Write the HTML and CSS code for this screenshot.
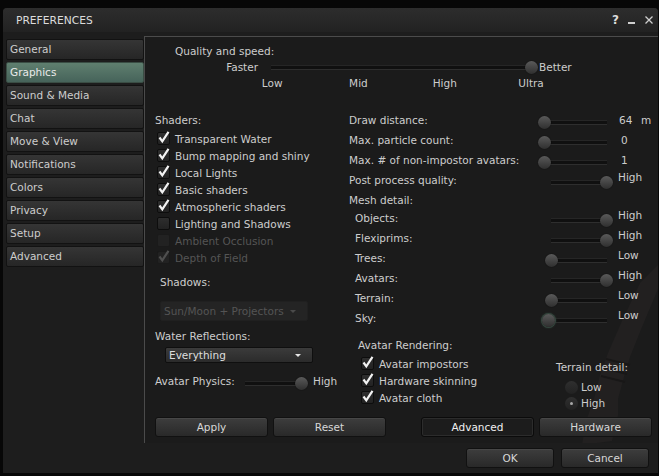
FILE: index.html
```html
<!DOCTYPE html>
<html lang="en">
<head>
    <meta charset="UTF-8">
    <title>Preferences</title>
    <link rel="stylesheet" href="styles.css">
</head>
<body>
<div class="floater">
    <div class="titlebar">
        <span class="title">PREFERENCES</span>
        <div class="controls">
            <span class="help">?</span>
            <span class="minimize"></span>
            <svg class="close" width="8" height="8" viewBox="0 0 8 8"><path d="M0.5 0.5 L7.5 7.5 M7.5 0.5 L0.5 7.5" stroke="#cfcfcf" stroke-width="1.3"/></svg>
        </div>
    </div>

    <div class="main">
        <ul class="tabs">
            <li>General</li>
            <li class="active">Graphics</li>
            <li>Sound &amp; Media</li>
            <li>Chat</li>
            <li>Move &amp; View</li>
            <li>Notifications</li>
            <li>Colors</li>
            <li>Privacy</li>
            <li>Setup</li>
            <li>Advanced</li>
        </ul>

        <div class="panel">
            <!-- faint avatar arm in the background -->
            <svg class="watermark" width="90" height="180" viewBox="0 0 90 180">
                <path d="M90 0 L90 24 L74 62 L62 92 L56 112 L50 134 L50 150 L44 176 L14 180 L18 156 L26 134 L32 110 L40 88 L54 56 L72 18 Z" fill="#222020"/>
                <path d="M38 94 L62 100 M35 103 L59 109 M33 111 L57 117" stroke="#181717" stroke-width="2"/>
            </svg>

            <div class="quality">
                <div class="q-title">Quality and speed:</div>
                <div class="q-row">
                    <span class="q-faster">Faster</span>
                    <div class="slider q-slider"><i class="track"></i><i class="knob max"></i></div>
                    <span class="q-better">Better</span>
                </div>
                <div class="q-ticks">
                    <span>Low</span><span>Mid</span><span>High</span><span>Ultra</span>
                </div>
            </div>

            <div class="columns">
                <div class="col-left">
                    <div class="hdr">Shaders:</div>
                    <div class="cb"><span class="box"><svg viewBox="0 0 13 13"><path d="M2.5 6.5 L5.3 10.3 L11.5 0.8"/></svg></span>Transparent Water</div>
                    <div class="cb"><span class="box"><svg viewBox="0 0 13 13"><path d="M2.5 6.5 L5.3 10.3 L11.5 0.8"/></svg></span>Bump mapping and shiny</div>
                    <div class="cb"><span class="box"><svg viewBox="0 0 13 13"><path d="M2.5 6.5 L5.3 10.3 L11.5 0.8"/></svg></span>Local Lights</div>
                    <div class="cb"><span class="box"><svg viewBox="0 0 13 13"><path d="M2.5 6.5 L5.3 10.3 L11.5 0.8"/></svg></span>Basic shaders</div>
                    <div class="cb"><span class="box"><svg viewBox="0 0 13 13"><path d="M2.5 6.5 L5.3 10.3 L11.5 0.8"/></svg></span>Atmospheric shaders</div>
                    <div class="cb"><span class="box"></span>Lighting and Shadows</div>
                    <div class="cb disabled"><span class="box"></span>Ambient Occlusion</div>
                    <div class="cb disabled"><span class="box"><svg viewBox="0 0 13 13"><path d="M2.5 6.5 L5.3 10.3 L11.5 0.8"/></svg></span>Depth of Field</div>

                    <div class="shadows-lbl">Shadows:</div>
                    <div class="combo combo-off">Sun/Moon + Projectors<i class="arrow"></i></div>

                    <div class="water-lbl">Water Reflections:</div>
                    <div class="combo combo-on">Everything<i class="arrow"></i></div>

                    <div class="physics">
                        <span class="physics-lbl">Avatar Physics:</span>
                        <div class="slider s-phys"><i class="track"></i><i class="knob max"></i></div>
                        <span class="physics-val">High</span>
                    </div>
                </div>

                <div class="col-right">
                    <div class="row"><span class="lbl">Draw distance:</span><div class="slider s-a"><i class="track"></i><i class="knob"></i></div><span class="val">64</span><span>m</span></div>
                    <div class="row"><span class="lbl">Max. particle count:</span><div class="slider s-a"><i class="track"></i><i class="knob"></i></div><span class="val num">0</span></div>
                    <div class="row"><span class="lbl">Max. # of non-impostor avatars:</span><div class="slider s-a"><i class="track"></i><i class="knob"></i></div><span class="val num">1</span></div>
                    <div class="row"><span class="lbl">Post process quality:</span><div class="slider s-b"><i class="track"></i><i class="knob max"></i></div><span class="val top">High</span></div>
                    <div class="mesh-hdr">Mesh detail:</div>
                    <div class="row sub"><span class="lbl">Objects:</span><div class="slider s-b"><i class="track"></i><i class="knob max"></i></div><span class="val top">High</span></div>
                    <div class="row sub"><span class="lbl">Flexiprims:</span><div class="slider s-b"><i class="track"></i><i class="knob max"></i></div><span class="val top">High</span></div>
                    <div class="row sub"><span class="lbl">Trees:</span><div class="slider s-b"><i class="track"></i><i class="knob"></i></div><span class="val top">Low</span></div>
                    <div class="row sub"><span class="lbl">Avatars:</span><div class="slider s-b"><i class="track"></i><i class="knob max"></i></div><span class="val top">High</span></div>
                    <div class="row sub"><span class="lbl">Terrain:</span><div class="slider s-b"><i class="track"></i><i class="knob"></i></div><span class="val top">Low</span></div>
                    <div class="row sub"><span class="lbl">Sky:</span><div class="slider s-b"><i class="track"></i><i class="knob focus"></i></div><span class="val top">Low</span></div>

                    <div class="rend">
                        <div class="rend-left">
                            <div class="rend-hdr">Avatar Rendering:</div>
                            <div class="cb"><span class="box"><svg viewBox="0 0 13 13"><path d="M2.5 6.5 L5.3 10.3 L11.5 0.8"/></svg></span>Avatar impostors</div>
                            <div class="cb"><span class="box"><svg viewBox="0 0 13 13"><path d="M2.5 6.5 L5.3 10.3 L11.5 0.8"/></svg></span>Hardware skinning</div>
                            <div class="cb"><span class="box"><svg viewBox="0 0 13 13"><path d="M2.5 6.5 L5.3 10.3 L11.5 0.8"/></svg></span>Avatar cloth</div>
                        </div>
                        <div class="terrain">
                            <div>Terrain detail:</div>
                            <div class="radios">
                                <div class="rb"><span class="dot"></span>Low</div>
                                <div class="rb on"><span class="dot"></span>High</div>
                            </div>
                        </div>
                    </div>
                </div>
            </div>

            <div class="panel-buttons">
                <button class="btn">Apply</button>
                <button class="btn">Reset</button>
                <button class="btn pressed gap">Advanced</button>
                <button class="btn">Hardware</button>
            </div>
        </div>
    </div>

    <div class="footer">
        <button class="btn small">OK</button>
        <button class="btn small">Cancel</button>
    </div>
</div>
</body>
</html>
```

FILE: styles.css
```css
* {
    box-sizing: border-box;
}

body {
    margin: 0;
    background: #070707;
    font-family: "DejaVu Sans", sans-serif;
    font-size: 10.5px;
    color: #cdcdcd;
}

.floater {
    margin: 8px 0 0 3px;
    width: 655px;
    height: 465px;
    background: #1d1d1d;
    border-radius: 4px 4px 0 0;
    display: flex;
    flex-direction: column;
    overflow: hidden;
}

/* title bar */
.titlebar {
    height: 24px;
    display: flex;
    align-items: center;
    padding: 0 5px 0 13px;
    background: linear-gradient(#2d2d2d, #222);
    color: #dcdcdc;
    font-size: 10.7px;
}
.title {
    flex: 1;
}
.controls {
    display: flex;
    align-items: center;
}
.help {
    font-weight: bold;
    font-size: 12px;
    margin-right: 9px;
}
.minimize {
    width: 7px;
    height: 2px;
    background: #cfcfcf;
    margin: 6px 10px 0 0;
}

/* tabs + panel */
.main {
    margin-top: 4px;
    height: 407px;
    display: flex;
}
.tabs {
    list-style: none;
    margin: 0;
    padding: 3px 0 0 3px;
    width: 141px;
    display: flex;
    flex-direction: column;
    gap: 2px;
}
.tabs li {
    height: 21px;
    line-height: 19px;
    padding-left: 3px;
    border: 1px solid #121212;
    border-radius: 2px;
    background: linear-gradient(#353535, #262626);
}
.tabs li.active {
    background: linear-gradient(#5f7f6f, #46635a);
    border-color: #3a4d44;
    color: #eaeaea;
}

.panel {
    flex: 1;
    position: relative;
    overflow: hidden;
    border-top: 1px solid #4b4b4b;
    border-left: 1px solid #4b4b4b;
    background: #1b1b1b;
    display: flex;
    flex-direction: column;
}
.watermark {
    position: absolute;
    right: 0;
    top: 228px;
}

/* quality slider */
.quality {
    position: relative;
}
.q-title {
    margin: 7px 0 0 30px;
    line-height: 14px;
}
.q-row {
    margin-top: 2px;
    height: 14px;
    display: flex;
    align-items: center;
}
.q-faster {
    width: 113px;
    text-align: right;
}
.q-slider {
    margin-left: 7px;
    width: 273px;
}
.q-slider .track {
    top: 5px;
    height: 3px;
    background: #0e0e0e;
    border-top: 1px solid #2c2c2c;
    border-bottom: 1px solid #333;
}
.q-better {
    margin-left: 1px;
}
.q-ticks {
    margin: 2px 0 0 84px;
    display: flex;
    line-height: 14px;
}
.q-ticks span {
    width: 86.3px;
    text-align: center;
}

/* sliders */
.slider {
    position: relative;
    height: 13px;
}
.slider .track {
    position: absolute;
    left: 6px;
    right: 6px;
    top: 4px;
    height: 5px;
    background: #101010;
    border-top: 1px solid #262626;
    border-bottom: 1px solid #2e2e2e;
}
.slider .knob {
    position: absolute;
    left: 0;
    top: 0;
    width: 13px;
    height: 13px;
    border-radius: 50%;
    background: linear-gradient(#5a5a5a, #2f2f2f);
    box-shadow: 0 0 1px #000;
}
.slider .knob.max {
    left: auto;
    right: 0;
}
.slider .knob.focus {
    left: -3px;
    box-shadow: 0 0 0 1px #34463d, 0 0 2px 1px #2b3a33;
}

/* columns */
.columns {
    margin-top: 20px;
    display: flex;
    position: relative;
}
.col-left {
    width: 204px;
    padding-left: 10px;
}
.hdr {
    line-height: 20px;
}
.cb {
    height: 17px;
    display: flex;
    align-items: center;
    padding-left: 2px;
}
.cb .box {
    width: 13px;
    height: 13px;
    margin-right: 5px;
    border: 1px solid #0d0d0d;
    border-radius: 2px;
    background: linear-gradient(#2e2e2e, #222);
}
.cb .box svg {
    display: block;
    width: 13px;
    height: 13px;
    margin: -2px 0 0 -1px;
    overflow: visible;
}
.cb .box path {
    fill: none;
    stroke: #f2f2f2;
    stroke-width: 2.2;
}
.cb.disabled {
    color: #555;
}
.cb.disabled .box {
    background: #222;
    border-color: #1a1a1a;
}
.cb.disabled .box path {
    stroke: #4f4f4f;
}

.shadows-lbl {
    margin: 9px 0 0 5px;
    line-height: 14px;
}
.combo {
    position: relative;
    width: 148px;
    display: flex;
    align-items: center;
    border-radius: 2px;
}
.combo .arrow {
    position: absolute;
    right: 11px;
    top: 50%;
    margin-top: -1px;
    border-left: 3.5px solid transparent;
    border-right: 3.5px solid transparent;
    border-top: 3px solid #e6e6e6;
}
.combo-off {
    margin: 12px 0 0 5px;
    height: 20px;
    padding-left: 3px;
    background: #242424;
    border: 1px solid #202020;
    color: #545454;
}
.combo-off .arrow {
    border-top-color: #4a4a4a;
}
.water-lbl {
    margin-top: 8px;
    line-height: 14px;
}
.combo-on {
    margin: 4px 0 0 10px;
    height: 16px;
    padding-left: 3px;
    background: linear-gradient(#3b3b3b, #2b2b2b);
    border: 1px solid #0f0f0f;
    color: #dedede;
}

.physics {
    margin-top: 11px;
    height: 14px;
    display: flex;
    align-items: center;
}
.physics-lbl {
    width: 84px;
}
.s-phys {
    width: 69px;
    margin-top: 5px;
}
.physics-val {
    margin-left: 5px;
}

.col-right {
    flex: 1;
}
.row {
    height: 20px;
    display: flex;
    align-items: center;
}
.row .lbl {
    width: 189px;
}
.row.sub .lbl {
    padding-left: 6px;
}
.s-a {
    width: 75px;
    margin-top: 4px;
}
.s-b {
    width: 68px;
    margin: 4px 0 0 7px;
}
.row .val {
    margin-left: 6px;
    width: 22px;
}
.row .val.num {
    margin-left: 8px;
}
.row .val.top {
    margin-left: 5px;
    align-self: flex-start;
    line-height: 14px;
}
.mesh-hdr {
    height: 18px;
    line-height: 20px;
}

.rend {
    margin-top: 10px;
    display: flex;
}
.rend-left {
    width: 207px;
    padding-left: 9px;
}
.rend-hdr {
    line-height: 14px;
    margin-bottom: 3px;
}
.rend-left .cb {
    padding-left: 3px;
}
.terrain {
    padding-top: 22px;
    line-height: 14px;
}
.radios {
    margin-top: 5px;
    padding-left: 9px;
}
.rb {
    height: 16px;
    display: flex;
    align-items: center;
}
.rb .dot {
    width: 13px;
    height: 13px;
    margin-right: 3px;
    border-radius: 50%;
    background: linear-gradient(#2f2f2f, #222);
    display: flex;
    align-items: center;
    justify-content: center;
}
.rb.on .dot::after {
    content: "";
    width: 3px;
    height: 3px;
    border-radius: 50%;
    background: #a8a8a8;
}

/* buttons */
.btn {
    height: 20px;
    width: 113px;
    padding: 0;
    font: inherit;
    color: #d8d8d8;
    background: linear-gradient(#3d3d3d, #292929);
    border: 1px solid #111;
    border-radius: 3px;
    box-shadow: inset 0 1px 0 #474747;
}
.btn.pressed {
    background: #1c1c1c;
    border-color: #0b0b0b;
    box-shadow: inset 0 0 0 1px #2c2c2c;
    color: #f0f0f0;
}
.btn.small {
    width: 88px;
}
.panel-buttons {
    margin-top: auto;
    padding: 0 0 6px 10px;
    display: flex;
    gap: 5px;
    position: relative;
}
.panel-buttons .gap {
    margin-left: 30px;
}
.footer {
    display: flex;
    justify-content: flex-end;
    gap: 7px;
    padding: 5px 9px 0 0;
}
```
